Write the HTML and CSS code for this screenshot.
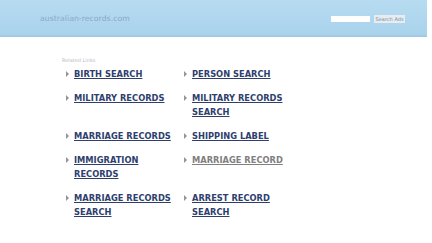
FILE: index.html
```html
<!DOCTYPE html>
<html>
<head>
<meta charset="utf-8">
<link rel="stylesheet" href="styles.css">
</head>
<body>
<div class="header">
  <div class="domain">australian-records.com</div>
  <div class="search">
    <span class="input"></span>
    <span class="btn">Search Ads</span>
  </div>
</div>
<div class="main">
  <div class="related">Related Links</div>
  <ul class="links">
    <li><a href="#">BIRTH SEARCH</a></li>
    <li><a href="#">PERSON SEARCH</a></li>
    <li><a href="#">MILITARY RECORDS</a></li>
    <li><a href="#">MILITARY RECORDS SEARCH</a></li>
    <li><a href="#">MARRIAGE RECORDS</a></li>
    <li><a href="#">SHIPPING LABEL</a></li>
    <li><a href="#">IMMIGRATION RECORDS</a></li>
    <li><a href="#" class="visited">MARRIAGE RECORD</a></li>
    <li><a href="#">MARRIAGE RECORDS SEARCH</a></li>
    <li><a href="#">ARREST RECORD SEARCH</a></li>
  </ul>
</div>
</body>
</html>
```
FILE: styles.css
```css
html, body {
  margin: 0;
  padding: 0;
  background: #ffffff;
  font-family: "DejaVu Sans", sans-serif;
}
.header {
  width: 427px;
  height: 35px;
  background: linear-gradient(#b7dcf1, #a9d2ec);
  border-bottom: 2px solid #a4c9e3;
  display: flex;
  align-items: center;
  justify-content: space-between;
  box-sizing: content-box;
}
.domain {
  margin-left: 40px;
  margin-top: 1px;
  font-size: 7.8px;
  color: #8ea8c7;
}
.search {
  display: flex;
  align-items: center;
  gap: 4px;
  margin-right: 22px;
  margin-top: 3px;
}
.input {
  width: 39px;
  height: 6px;
  background: #ffffff;
}
.btn {
  font-size: 5px;
  color: #7a8a9a;
  background: #e6edf2;
  padding: 1px 1.5px;
}
.main {
  padding-left: 66px;
  padding-top: 20px;
}
.related {
  font-size: 5px;
  color: #b6bcc4;
  height: 10px;
  margin-left: -4px;
}
.links {
  list-style: none;
  margin: 0;
  padding: 0;
  display: grid;
  grid-template-columns: 118px 118px;
  row-gap: 10px;
}
.links li {
  position: relative;
  padding-left: 8px;
  font-size: 8.3px;
  font-weight: bold;
  line-height: 14px;
}
.links li::before {
  content: "";
  position: absolute;
  left: 0;
  top: 4px;
  width: 0;
  height: 0;
  border-left: 3.5px solid #959595;
  border-top: 3px solid transparent;
  border-bottom: 3px solid transparent;
}
.links a {
  color: #2e3f6e;
  text-decoration: underline;
}
.links a.visited {
  color: #808080;
}
```
